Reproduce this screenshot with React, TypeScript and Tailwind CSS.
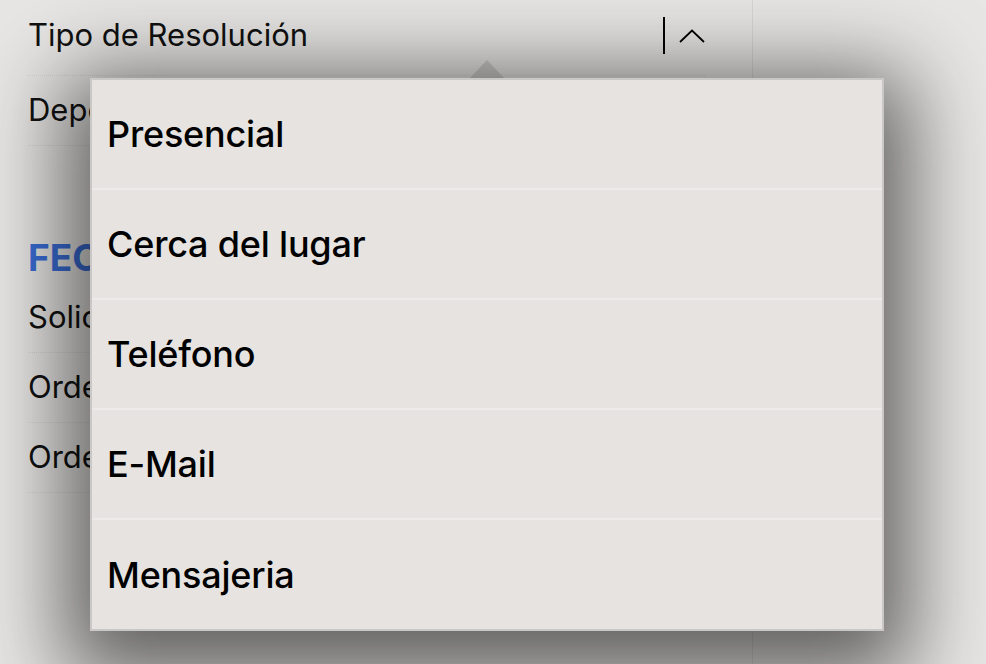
const options = ['Presencial', 'Cerca del lugar', 'Teléfono', 'E-Mail', 'Mensajeria'];

function Row({ label, children, tall }: { label: string; children?: React.ReactNode; tall?: boolean }) {
  return (
    <div
      className={`flex items-center justify-between border-b border-dotted border-[#d4d4d4] ${
        tall ? 'h-[76px] pb-1' : 'h-[70px]'
      }`}
    >
      <span className="text-[31px] text-[#111]">{label}</span>
      {children}
    </div>
  );
}

export default function App() {
  return (
    <div
      className="relative h-[664px] w-full overflow-hidden bg-[#e7e6e4]"
      style={{ fontFamily: 'Inter, "Noto Sans", sans-serif' }}
    >
      {/* Form column behind the popover */}
      <div className="h-full w-[753px] border-r border-[#d6d6d6] pl-[28px] pr-[47px]">
        <Row label="Tipo de Resolución" tall>
          <div className="flex items-center gap-[14px]">
            <div className="h-[37px] w-[2px] bg-black" />
            <svg width="26" height="14" viewBox="0 0 26 14" fill="none" className="mt-[1px]">
              <polyline points="1,13 13,1.5 25,13" stroke="black" strokeWidth="1.8" />
            </svg>
          </div>
        </Row>
        <Row label="Dependencia" />

        <div className="flex h-[50px] items-center mt-[87px]">
          <h2 className="text-[37px] font-bold text-[#3a6dd6]">FECHAS</h2>
        </div>
        <Row label="Solicitud" />
        <Row label="Orden de trabajo" />
        <Row label="Orden de cierre" />
      </div>

      {/* Popover arrow */}
      <div className="absolute left-[470px] top-[60px] h-0 w-0 border-x-[17px] border-b-[18px] border-x-transparent border-b-[#cbcac8]" />

      {/* Popover */}
      <div className="absolute left-[90px] top-[78px] w-[794px] h-[553px] border-2 border-[#c9c8c6] bg-[#e6e3e0] shadow-[0_22px_80px_26px_rgba(0,0,0,0.58)]">
        {options.map((opt, i) => (
          <div
            key={opt}
            className={`flex h-[110px] items-center pl-[15px] ${
              i < options.length - 1 ? 'border-b-2 border-[#ecebe9]' : ''
            }`}
          >
            <span className="text-[36px] font-medium tracking-[-0.2px] text-black">{opt}</span>
          </div>
        ))}
      </div>
    </div>
  );
}
